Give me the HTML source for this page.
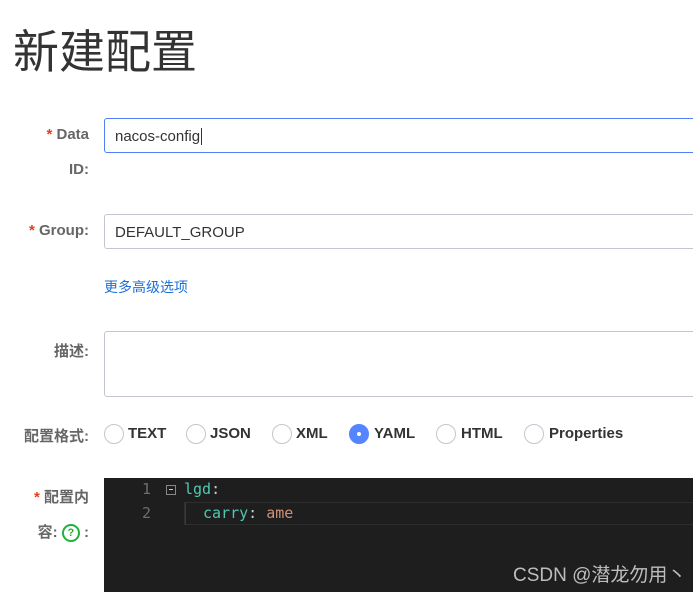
<!DOCTYPE html>
<html><head><meta charset="utf-8"><style>
body{margin:0;width:693px;height:592px;overflow:hidden;background:#fff;position:relative;font-family:"Liberation Sans","Noto Sans CJK SC",sans-serif}
.a{position:absolute;white-space:nowrap}
.lbl{font-size:15px;font-weight:bold;color:#666;text-align:right}
.st{color:#e43c1d}
.inp{position:absolute;left:104px;width:600px;border:1px solid #c4c6cf;border-radius:3px;box-sizing:border-box;font-size:14px;color:#333;padding-left:10px}
.r{position:absolute;top:424px;width:20px;height:20px;border:1px solid #c4c6cf;border-radius:50%;box-sizing:border-box;background:#fff}
.rt{position:absolute;top:425px;font-size:15px;font-weight:bold;color:#333}
.code{font-family:"DejaVu Sans Mono","Liberation Mono",monospace;font-size:15px}
</style></head><body>
<div class="a" style="left:13px;top:23px;font-size:46px;color:#333;line-height:58px">新建配置</div>

<div class="a lbl" style="left:30px;top:126px;width:59px"><span class="st">* </span>Data</div>
<div class="a lbl" style="left:30px;top:161px;width:59px">ID:</div>
<div class="inp" style="top:118px;height:35px;border-color:#4f7ef8;line-height:35px;font-size:15px">nacos-config<span style="border-left:1px solid #333;margin-left:1px"></span></div>

<div class="a lbl" style="left:10px;top:222px;width:79px"><span class="st">* </span>Group:</div>
<div class="inp" style="top:214px;height:35px;line-height:35px;font-size:15px">DEFAULT_GROUP</div>

<div class="a" style="left:104px;top:277px;font-size:14px;color:#1a6fd6">更多高级选项</div>

<div class="a lbl" style="left:30px;top:340px;width:59px">描述:</div>
<div class="inp" style="top:331px;height:66px"></div>

<div class="a lbl" style="left:10px;top:425px;width:79px">配置格式:</div>
<div class="r" style="left:104px"></div><div class="rt" style="left:128px">TEXT</div>
<div class="r" style="left:186px"></div><div class="rt" style="left:210px">JSON</div>
<div class="r" style="left:272px"></div><div class="rt" style="left:296px">XML</div>
<div class="r" style="left:349px;background:#5584ff;border-color:#5584ff"><div style="position:absolute;left:7px;top:7px;width:4px;height:4px;background:#fff;border-radius:50%"></div></div><div class="rt" style="left:374px">YAML</div>
<div class="r" style="left:436px"></div><div class="rt" style="left:461px">HTML</div>
<div class="r" style="left:524px"></div><div class="rt" style="left:549px">Properties</div>

<div class="a lbl" style="left:20px;top:486px;width:69px"><span class="st">* </span>配置内</div>
<div class="a lbl" style="left:20px;top:521px;width:69px">容: <span style="display:inline-block;width:18px;height:18px;border:2px solid #1fb33c;border-radius:50%;box-sizing:border-box;color:#1fb33c;font-size:11px;line-height:14px;text-align:center;vertical-align:middle">?</span> :</div>

<div class="a" style="left:104px;top:478px;width:589px;height:114px;background:#1e1e1e">
 <div class="a" style="left:80px;top:24px;width:520px;height:23px;border:1px solid #2e2e2e;box-sizing:border-box"></div>
 <div class="a" style="left:81px;top:24px;width:1px;height:23px;background:#3a3a3a"></div>
 <div class="a code" style="left:38px;top:2px;color:#6e6e6e">1</div>
 <div class="a code" style="left:38px;top:26px;color:#6e6e6e">2</div>
 <div class="a" style="left:62px;top:7px;width:10px;height:10px;border:1px solid #888;box-sizing:border-box"><div style="position:absolute;left:2px;top:3px;width:4px;height:1px;background:#ccc"></div></div>
 <div class="a code" style="left:80px;top:2px"><span style="color:#4ec9b0">lgd</span><span style="color:#ccc">:</span></div>
 <div class="a code" style="left:99px;top:26px"><span style="color:#4ec9b0">carry</span><span style="color:#ccc">: </span><span style="color:#ce9178">ame</span></div>
 <div class="a" style="left:409px;top:82px;font-size:19px;color:#bdbdbd">CSDN @潜龙勿用丶</div>
</div>
</body></html>
